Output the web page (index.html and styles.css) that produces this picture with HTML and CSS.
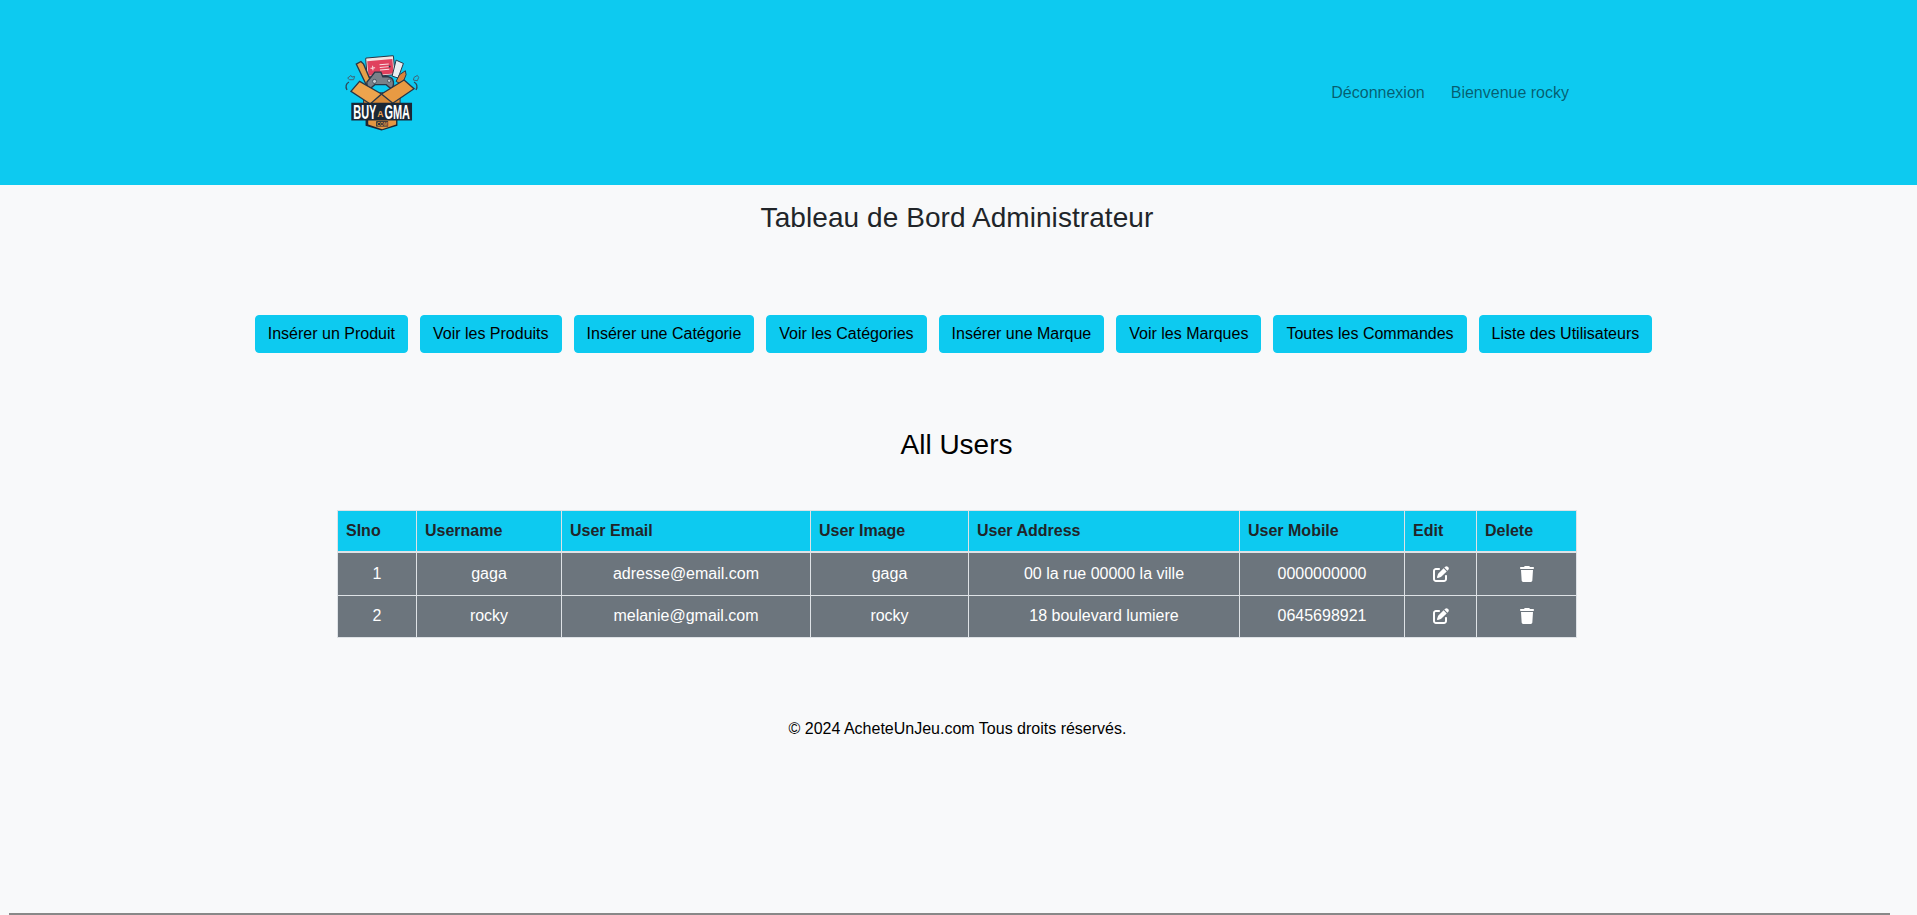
FILE: index.html
```html
<!DOCTYPE html>
<html lang="fr">
<head>
    <meta charset="UTF-8">
    <meta name="viewport" content="width=device-width, initial-scale=1.0">
    <title>Tableau de Bord Administrateur</title>
    <link rel="stylesheet" href="styles.css">
</head>
<body>
    <header class="topbar">
        <svg class="logo" viewBox="70 65 235 240" role="img" aria-label="Buy a GMA">
            <path d="M84 140 l10 -8 l3 5 l8 -2 l-3 10 h-12z M294 132 l-10 6 l-2 8 l12 2 l4 -10z" fill="none" stroke="#3f6478" stroke-width="3"/>
            <path d="M88 152 q-14 8 -6 24 M284 152 q14 8 6 24" fill="none" stroke="#2e4656" stroke-width="4"/>
            <g transform="rotate(-5 180 100)">
                <rect x="140" y="76" width="84" height="58" rx="3" fill="#f1e6e4" stroke="#2a3646" stroke-width="3"/>
                <rect x="144" y="86" width="76" height="44" fill="#e0415e"/>
                <path d="M152 108h14M159 101v14M180 100h28M180 108h28M180 116h28" stroke="#f9dfe3" stroke-width="3"/>
                <circle cx="210" cy="108" r="3" fill="#2a3646"/>
            </g>
            <path d="M110 98 l14 -8 l8 8 l22 52 l-14 10z" fill="#e6a04a" stroke="#2a3646" stroke-width="4"/>
            <path d="M230 86 l22 10 l-16 44 l-18 -6z" fill="#e9edf0" stroke="#2a3646" stroke-width="3"/>
            <path d="M230 150 l10 -20 l18 -12 l2 12 l-12 30z" fill="#d9843a" stroke="#2a3646" stroke-width="3"/>
            <path d="M152 140 l14 -18 h18 l6 14 h16 q14 2 16 16 q2 18 -10 18 l-12 -10 h-34 l-12 10 q-14 0 -12 -18z" fill="#7a8189" stroke="#2a3646" stroke-width="4"/>
            <circle cx="165" cy="150" r="6" fill="#c9ced3" stroke="#2a3646" stroke-width="2"/>
            <circle cx="209" cy="148" r="5" fill="#c9ced3" stroke="#2a3646" stroke-width="2"/>
            <path d="M132 190 l54 -6 l56 6 v30 h-110z" fill="#d98a38" stroke="#2a3646" stroke-width="3"/>
            <path d="M120 150 l66 38 l-34 30 l-58 -38z" fill="#eda44d" stroke="#2a3646" stroke-width="4"/>
            <path d="M254 146 l30 26 l-64 44 l-34 -28z" fill="#e89a43" stroke="#2a3646" stroke-width="4"/>
            <path d="M95 214 h183 v54 h-44 v16 l-48 14 l-48 -14 v-16 h-43z" fill="#1a2736"/>
            <path d="M146 268 h84 v12 l-42 14 l-42 -14z" fill="#e39743"/>
            <rect x="170" y="270" width="36" height="16" fill="#1a2736"/>
            <text class="logo-name" transform="translate(101 262) scale(.55 1)">BUY</text>
            <text class="logo-a" x="173" y="257">A</text>
            <text class="logo-name" transform="translate(195 262) scale(.55 1)">GMA</text>
            <text class="logo-com" x="188" y="283" text-anchor="middle">COM</text>
        </svg>
        <nav class="topnav">
            <a href="#">Déconnexion</a>
            <a href="#">Bienvenue rocky</a>
        </nav>
    </header>

    <h1 class="page-title">Tableau de Bord Administrateur</h1>

    <div class="actions">
        <button>Insérer un Produit</button>
        <button>Voir les Produits</button>
        <button>Insérer une Catégorie</button>
        <button>Voir les Catégories</button>
        <button>Insérer une Marque</button>
        <button>Voir les Marques</button>
        <button>Toutes les Commandes</button>
        <button>Liste des Utilisateurs</button>
    </div>

    <h2 class="section-title">All Users</h2>

    <table class="users">
        <colgroup>
            <col class="col-no">
            <col class="col-name">
            <col class="col-email">
            <col class="col-image">
            <col class="col-address">
            <col class="col-mobile">
            <col class="col-edit">
            <col class="col-delete">
        </colgroup>
        <thead>
            <tr>
                <th>SIno</th>
                <th>Username</th>
                <th>User Email</th>
                <th>User Image</th>
                <th>User Address</th>
                <th>User Mobile</th>
                <th>Edit</th>
                <th>Delete</th>
            </tr>
        </thead>
        <tbody>
            <tr>
                <td>1</td>
                <td>gaga</td>
                <td>adresse@email.com</td>
                <td>gaga</td>
                <td>00 la rue 00000 la ville</td>
                <td>0000000000</td>
                <td>
                    <svg class="icon" viewBox="0 0 512 512"><path d="M471.6 21.7c-21.9-21.9-57.3-21.9-79.2 0L362.3 51.7l97.9 97.9 30.1-30.1c21.9-21.9 21.9-57.3 0-79.2L471.6 21.7zm-299.2 220c-6.1 6.1-10.8 13.6-13.5 21.9l-29.6 88.8c-2.9 8.6-.6 18.1 5.8 24.6s15.9 8.7 24.6 5.8l88.8-29.6c8.2-2.7 15.7-7.4 21.9-13.5L437.7 172.3 339.7 74.3 172.4 241.7zM96 64C43 64 0 107 0 160V416c0 53 43 96 96 96H352c53 0 96-43 96-96V320c0-17.7-14.3-32-32-32s-32 14.3-32 32v96c0 17.7-14.3 32-32 32H96c-17.7 0-32-14.3-32-32V160c0-17.7 14.3-32 32-32h96c17.7 0 32-14.3 32-32s-14.3-32-32-32H96z"/></svg>
                </td>
                <td>
                    <svg class="icon icon-trash" viewBox="0 0 448 512"><path d="M135.2 17.7L128 32H32C14.3 32 0 46.3 0 64S14.3 96 32 96H416c17.7 0 32-14.3 32-32s-14.3-32-32-32H320l-7.2-14.3C307.4 6.8 296.3 0 284.2 0H163.8c-12.1 0-23.2 6.8-28.6 17.7zM416 128H32L53.2 467c1.6 25.3 22.6 45 47.9 45H346.9c25.3 0 46.3-19.7 47.9-45L416 128z"/></svg>
                </td>
            </tr>
            <tr>
                <td>2</td>
                <td>rocky</td>
                <td>melanie@gmail.com</td>
                <td>rocky</td>
                <td>18 boulevard lumiere</td>
                <td>0645698921</td>
                <td>
                    <svg class="icon" viewBox="0 0 512 512"><path d="M471.6 21.7c-21.9-21.9-57.3-21.9-79.2 0L362.3 51.7l97.9 97.9 30.1-30.1c21.9-21.9 21.9-57.3 0-79.2L471.6 21.7zm-299.2 220c-6.1 6.1-10.8 13.6-13.5 21.9l-29.6 88.8c-2.9 8.6-.6 18.1 5.8 24.6s15.9 8.7 24.6 5.8l88.8-29.6c8.2-2.7 15.7-7.4 21.9-13.5L437.7 172.3 339.7 74.3 172.4 241.7zM96 64C43 64 0 107 0 160V416c0 53 43 96 96 96H352c53 0 96-43 96-96V320c0-17.7-14.3-32-32-32s-32 14.3-32 32v96c0 17.7-14.3 32-32 32H96c-17.7 0-32-14.3-32-32V160c0-17.7 14.3-32 32-32h96c17.7 0 32-14.3 32-32s-14.3-32-32-32H96z"/></svg>
                </td>
                <td>
                    <svg class="icon icon-trash" viewBox="0 0 448 512"><path d="M135.2 17.7L128 32H32C14.3 32 0 46.3 0 64S14.3 96 32 96H416c17.7 0 32-14.3 32-32s-14.3-32-32-32H320l-7.2-14.3C307.4 6.8 296.3 0 284.2 0H163.8c-12.1 0-23.2 6.8-28.6 17.7zM416 128H32L53.2 467c1.6 25.3 22.6 45 47.9 45H346.9c25.3 0 46.3-19.7 47.9-45L416 128z"/></svg>
                </td>
            </tr>
        </tbody>
    </table>

    <p class="copyright">© 2024 AcheteUnJeu.com Tous droits réservés.</p>

    <hr class="bottom-rule">
</body>
</html>
```

FILE: styles.css
```css
body {
    margin: 0;
    font-family: "Liberation Sans", Arial, sans-serif;
    font-size: 16px;
    line-height: 24px;
    color: #212529;
    background-color: #f8f9fa;
    overflow: hidden;
}

.topbar {
    display: flex;
    align-items: center;
    justify-content: space-between;
    height: 185px;
    padding: 0 348px 0 343px;
    background-color: #0dcaf0;
}
.logo {
    width: 78px;
    height: 80px;
}
.logo-name {
    font-family: "Liberation Sans", Arial, sans-serif;
    font-weight: bold;
    font-size: 60px;
    fill: #fff;
}
.logo-a {
    font-family: "Liberation Sans", Arial, sans-serif;
    font-weight: bold;
    font-size: 26px;
    fill: #f2a44d;
}
.logo-com {
    font-family: "Liberation Sans", Arial, sans-serif;
    font-weight: bold;
    font-size: 14px;
    fill: #e59a45;
}
.topnav {
    display: flex;
    gap: 26px;
}
.topnav a {
    color: rgba(0, 0, 0, .55);
    text-decoration: none;
}

.page-title {
    margin: 0;
    padding: 16px 3px 0 0;
    font-size: 28px;
    font-weight: 400;
    line-height: 34px;
    letter-spacing: .07px;
    text-align: center;
}

.actions {
    display: flex;
    justify-content: center;
    gap: 12px;
    margin-top: 80px;
    padding-right: 10px;
}
.actions button {
    height: 38px;
    padding: 0 12px;
    border: 1px solid #0dcaf0;
    border-radius: 4px;
    font: inherit;
    color: #000;
    background-color: #0dcaf0;
}

.section-title {
    margin: 75px 4px 0 0;
    font-size: 28px;
    font-weight: 400;
    line-height: 34px;
    color: #000;
    text-align: center;
}

.users {
    width: 1239px;
    margin: 48px 0 0 337px;
    table-layout: fixed;
    border-collapse: collapse;
}
.col-no { width: 79px; }
.col-name { width: 145px; }
.col-email { width: 249px; }
.col-image { width: 158px; }
.col-address { width: 271px; }
.col-mobile { width: 165px; }
.col-edit { width: 72px; }
.col-delete { width: 100px; }

.users th,
.users td {
    border: 1px solid #dee2e6;
}
.users th {
    padding: 8px;
    border-bottom-width: 2px;
    text-align: left;
    font-weight: bold;
    background-color: #0dcaf0;
}
.users td {
    padding: 8.75px 8px;
    text-align: center;
    color: #fff;
    background-color: #6c757d;
}
.icon {
    display: block;
    width: 16px;
    height: 16px;
    margin: 0 auto;
    fill: #fff;
}
.icon-trash {
    width: 14px;
}

.copyright {
    margin: 79px 2px 0 0;
    text-align: center;
    color: #000;
}

.bottom-rule {
    height: 2px;
    margin: 172px 27px 0 9px;
    border: 0;
    background-color: #888;
}
```
